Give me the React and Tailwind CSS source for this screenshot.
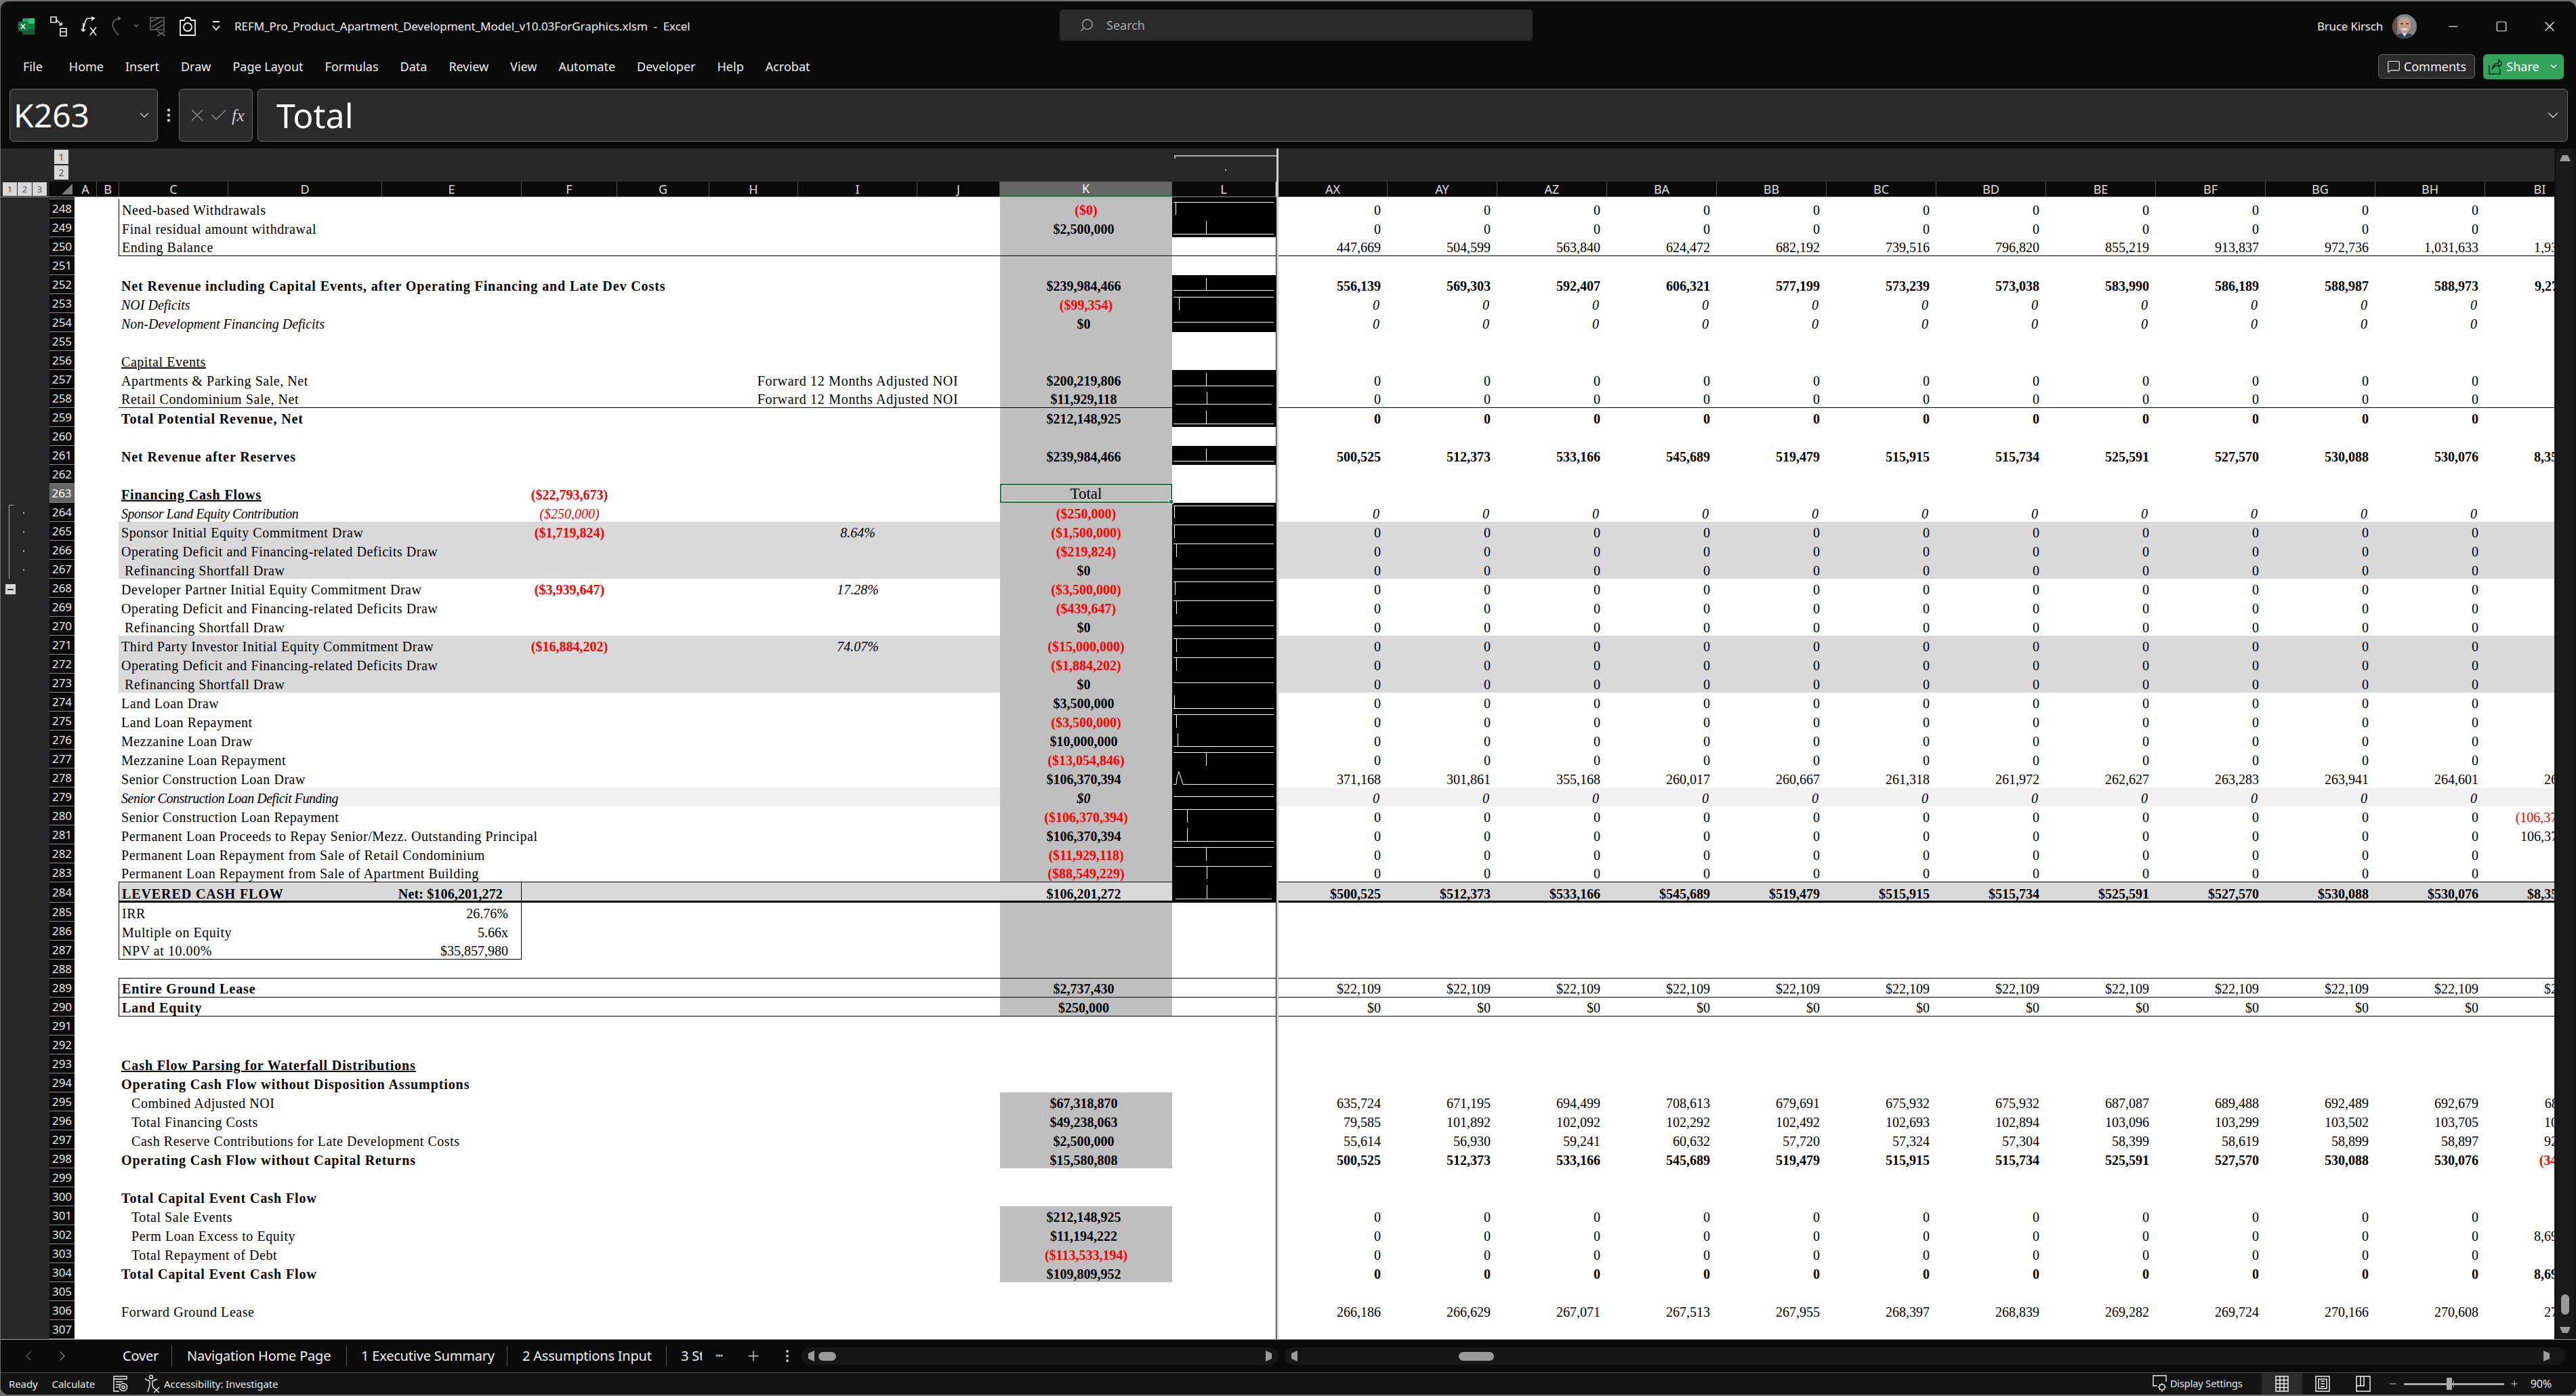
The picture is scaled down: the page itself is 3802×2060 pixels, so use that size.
import { ChevronDown, ChevronLeft, ChevronRight, Search, Minus, Square, X, Plus, Check, MessageSquare, EllipsisVertical } from "lucide-react"

const frozenCols = [
  ["A", "w-[33px]"], ["B", "w-[33px]"], ["C", "w-[161px]"], ["D", "w-[227px]"], ["E", "w-[206px]"],
  ["F", "w-[141px]"], ["G", "w-[136px]"], ["H", "w-[131px]"], ["I", "w-[176px]"], ["J", "w-[122px]"],
  ["K", "w-[254px]"], ["L", "w-[153px]"],
]
const scrollCols = ["AX", "AY", "AZ", "BA", "BB", "BC", "BD", "BE", "BF", "BG", "BH", "BI"]
const menu = ["File", "Home", "Insert", "Draw", "Page Layout", "Formulas", "Data", "Review", "View", "Automate", "Developer", "Help", "Acrobat"]

const z = Array(11).fill("0")
const dollarZero = [...Array(11).fill("$0"), ""]
const r250 = ["447,669", "504,599", "563,840", "624,472", "682,192", "739,516", "796,820", "855,219", "913,837", "972,736", "1,031,633", "1,935,021"]
const r252 = ["556,139", "569,303", "592,407", "606,321", "577,199", "573,239", "573,038", "583,990", "586,189", "588,987", "588,973", "9,270,114"]
const r261 = ["500,525", "512,373", "533,166", "545,689", "519,479", "515,915", "515,734", "525,591", "527,570", "530,088", "530,076", "8,350,220"]
const r278 = ["371,168", "301,861", "355,168", "260,017", "260,667", "261,318", "261,972", "262,627", "263,283", "263,941", "264,601", "265,263"]
const r295 = ["635,724", "671,195", "694,499", "708,613", "679,691", "675,932", "675,932", "687,087", "689,488", "692,489", "692,679", "680,112"]
const r296 = ["79,585", "101,892", "102,092", "102,292", "102,492", "102,693", "102,894", "103,096", "103,299", "103,502", "103,705", "103,909"]
const r297 = ["55,614", "56,930", "59,241", "60,632", "57,720", "57,324", "57,304", "58,399", "58,619", "58,899", "58,897", "921,040"]
const r298 = ["500,525", "512,373", "533,166", "545,689", "519,479", "515,915", "515,734", "525,591", "527,570", "530,088", "530,076", "(345,017)"]
const r306 = ["266,186", "266,629", "267,071", "267,513", "267,955", "268,397", "268,839", "269,282", "269,724", "270,166", "270,608", "271,050"]
const r284 = r261.map((v) => "$" + v)
const r289 = Array(12).fill("$22,109")
const r280 = [...z, "(106,370,394)"]
const r281 = [...z, "106,370,394"]
const r302 = [...z, "8,694,000"]

const FWD = "Forward 12 Months Adjusted NOI"
const DEFICIT = "Operating Deficit and Financing-related Deficits Draw"
const REFI = "Refinancing Shortfall Draw"

const rows = [
  { n: 247 },
  { n: 248, c: "Need-based Withdrawals", k: "($0)", r: z, box: true },
  { n: 249, c: "Final residual amount withdrawal", k: "$2,500,000", r: z, box: true },
  { n: 250, c: "Ending Balance", r: r250, box: true, line: true },
  { n: 251 },
  { n: 252, c: "Net Revenue including Capital Events, after Operating Financing and Late Dev Costs", b: true, k: "$239,984,466", r: r252, rb: true },
  { n: 253, c: "NOI Deficits", i: true, k: "($99,354)", r: z, ri: true },
  { n: 254, c: "Non-Development Financing Deficits", i: true, k: "$0", r: z, ri: true },
  { n: 255 },
  { n: 256, c: "Capital Events", u: true },
  { n: 257, c: "Apartments & Parking Sale, Net", h: FWD, k: "$200,219,806", r: z },
  { n: 258, c: "Retail Condominium Sale, Net", h: FWD, k: "$11,929,118", r: z, line: true },
  { n: 259, c: "Total Potential Revenue, Net", b: true, k: "$212,148,925", r: z, rb: true },
  { n: 260 },
  { n: 261, c: "Net Revenue after Reserves", b: true, k: "$239,984,466", r: r261, rb: true },
  { n: 262 },
  { n: 263, c: "Financing Cash Flows", b: true, u: true, f: "($22,793,673)", fb: true, k: "Total", sel: true },
  { n: 264, c: "Sponsor Land Equity Contribution", i: true, tight: true, f: "($250,000)", k: "($250,000)", r: z, ri: true },
  { n: 265, c: "Sponsor Initial Equity Commitment Draw", f: "($1,719,824)", fb: true, pct: "8.64%", k: "($1,500,000)", r: z, bg: "dark" },
  { n: 266, c: DEFICIT, k: "($219,824)", r: z, bg: "dark" },
  { n: 267, c: REFI, small: true, k: "$0", r: z, bg: "dark" },
  { n: 268, c: "Developer Partner Initial Equity Commitment Draw", f: "($3,939,647)", fb: true, pct: "17.28%", k: "($3,500,000)", r: z },
  { n: 269, c: DEFICIT, k: "($439,647)", r: z },
  { n: 270, c: REFI, small: true, k: "$0", r: z },
  { n: 271, c: "Third Party Investor Initial Equity Commitment Draw", f: "($16,884,202)", fb: true, pct: "74.07%", k: "($15,000,000)", r: z, bg: "dark" },
  { n: 272, c: DEFICIT, k: "($1,884,202)", r: z, bg: "dark" },
  { n: 273, c: REFI, small: true, k: "$0", r: z, bg: "dark" },
  { n: 274, c: "Land Loan Draw", k: "$3,500,000", r: z },
  { n: 275, c: "Land Loan Repayment", k: "($3,500,000)", r: z },
  { n: 276, c: "Mezzanine Loan Draw", k: "$10,000,000", r: z },
  { n: 277, c: "Mezzanine Loan Repayment", k: "($13,054,846)", r: z },
  { n: 278, c: "Senior Construction Loan Draw", k: "$106,370,394", r: r278 },
  { n: 279, c: "Senior Construction Loan Deficit Funding", i: true, tight: true, k: "$0", ki: true, r: z, ri: true, bg: "light" },
  { n: 280, c: "Senior Construction Loan Repayment", k: "($106,370,394)", r: r280 },
  { n: 281, c: "Permanent Loan Proceeds to Repay Senior/Mezz. Outstanding Principal", k: "$106,370,394", r: r281 },
  { n: 282, c: "Permanent Loan Repayment from Sale of Retail Condominium", k: "($11,929,118)", r: z },
  { n: 283, c: "Permanent Loan Repayment from Sale of Apartment Building", k: "($88,549,229)", r: z, line: true },
  { n: 284, c: "LEVERED CASH FLOW", b: true, e: "Net: $106,201,272", k: "$106,201,272", r: r284, rb: true, bg: "dark", box: true, boxR: true, total: true },
  { n: 285, c: "IRR", e2: "26.76%", box: true, boxR: true },
  { n: 286, c: "Multiple on Equity", e2: "5.66x", box: true, boxR: true },
  { n: 287, c: "NPV at 10.00%", e2: "$35,857,980", box: true, boxR: true, boxB: true },
  { n: 288, line: true },
  { n: 289, c: "Entire Ground Lease", b: true, k: "$2,737,430", r: r289, box: true, line: true },
  { n: 290, c: "Land Equity", b: true, k: "$250,000", r: dollarZero, box: true, line: true },
  { n: 291 },
  { n: 292 },
  { n: 293, c: "Cash Flow Parsing for Waterfall Distributions", b: true, u: true },
  { n: 294, c: "Operating Cash Flow without Disposition Assumptions", b: true },
  { n: 295, c: "Combined Adjusted NOI", ind: true, k: "$67,318,870", r: r295 },
  { n: 296, c: "Total Financing Costs", ind: true, k: "$49,238,063", r: r296 },
  { n: 297, c: "Cash Reserve Contributions for Late Development Costs", ind: true, k: "$2,500,000", r: r297 },
  { n: 298, c: "Operating Cash Flow without Capital Returns", b: true, k: "$15,580,808", r: r298, rb: true },
  { n: 299 },
  { n: 300, c: "Total Capital Event Cash Flow", b: true },
  { n: 301, c: "Total Sale Events", ind: true, k: "$212,148,925", r: z },
  { n: 302, c: "Perm Loan Excess to Equity", ind: true, k: "$11,194,222", r: r302 },
  { n: 303, c: "Total Repayment of Debt", ind: true, k: "($113,533,194)", r: z },
  { n: 304, c: "Total Capital Event Cash Flow", b: true, k: "$109,809,952", r: r302, rb: true },
  { n: 305 },
  { n: 306, c: "Forward Ground Lease", r: r306 },
  { n: 307 },
]

// line y, spike x, spike end y
const sparks = {
  248: [4, 5, 23], 249: [23, 50, 4], 252: [22, 50, 4], 253: [4, 10, 24], 254: [13],
  257: [23, 50, 4], 258: [23, 50, 4], 259: [23, 50, 4], 261: [22, 50, 4],
  264: [4, 3, 23], 265: [4, 3, 24], 266: [4, 6, 24], 267: [13], 268: [4, 4, 24], 269: [4, 6, 24], 270: [13],
  271: [4, 6, 24], 272: [4, 6, 24], 273: [13], 274: [23, 3, 4], 275: [4, 6, 24], 276: [23, 8, 4], 277: [4, 50, 24],
  279: [13], 280: [4, 22, 24], 281: [23, 22, 4], 282: [4, 50, 24], 283: [4, 50, 24], 284: [25, 50, 4],
}

function blackCell(n) {
  return n === 247 || n === 248 || n === 249 || n === 252 || n === 253 || n === 254 || n === 257 || n === 258 || n === 259 || n === 261 || (n >= 264 && n <= 284)
}
function greyCell(n) {
  if (n === 284) return false
  return n <= 290 || (n >= 295 && n <= 298) || (n >= 301 && n <= 304)
}

function Spark({ n }) {
  const s = sparks[n]
  if (n === 278) {
    return (
      <svg viewBox="0 0 153 28" className="block w-[153px] h-full" fill="none" stroke="#fff" strokeWidth="1">
        <path d="M2 23.5H6L7 14L10 4.5L13 14L16 23.5H150" />
      </svg>
    )
  }
  if (!s) return null
  const y = s[0] + 0.5
  return (
    <svg viewBox="0 0 153 28" className="block w-[153px] h-full" fill="none" stroke="#fff" strokeWidth="1" shapeRendering="crispEdges">
      <path d={`M2 ${y}H150`} />
      {s[1] && <path d={`M${s[1] + 0.5} ${y}V${s[2]}`} />}
    </svg>
  )
}

function Gutter({ n }) {
  return (
    <div className="w-[72px] shrink-0 bg-[#282828] flex">
      {n >= 264 && n <= 267 && (
        <div className={n === 264 ? "ml-[12px] mt-[3px] w-[7px] border-l border-t border-[#aaa]" : "ml-[12px] w-[7px] border-l border-[#aaa]"} />
      )}
      {n >= 264 && n <= 267 && <div className="ml-[14px] mt-[14px] w-[2px] h-[2px] bg-[#bbb]" />}
      {n === 268 && (
        <div className="ml-[7px] mt-[8px] w-[15px] h-[15px] bg-[#d8d8d8] flex items-center justify-center">
          <div className="w-[9px] h-[2px] bg-[#333]" />
        </div>
      )}
    </div>
  )
}

function money(v) {
  return v && v.startsWith("(") ? "text-[#ff0000]" : "text-black"
}

function Row({ row }) {
  const { n } = row
  const h = row.total ? "h-[30px]" : n === 247 ? "h-[3px]" : "h-[28px]"
  const lead = row.total ? "leading-[20px]" : "leading-[24px]"
  const bg = row.bg === "dark" ? "bg-[#d9d9d9]" : row.bg === "light" ? "bg-[#f2f2f2]" : "bg-white"
  const line = row.total ? "border-b-[3px] border-double border-black bg-clip-padding" : row.line ? "border-b border-black" : ""
  const labelCls = `${row.b ? "font-bold tracking-[0.9px] " : ""}${row.i ? "italic " : ""}${row.tight ? "tracking-[-0.5px] " : ""}${!row.b && !row.i ? "tracking-[0.55px] " : ""}${row.u ? "underline " : ""}`
  const pad = row.ind ? "pl-[19px]" : row.small ? "pl-[9px]" : "pl-[4px]"
  return (
    <div className={`flex ${h}`}>
      <Gutter n={n} />
      <div className={n === 263
        ? "w-[37px] shrink-0 bg-[#666] border-b border-[#888] border-r border-r-[#217346] text-white text-[17px] flex items-center justify-center font-['Noto_Sans',sans-serif]"
        : "w-[37px] shrink-0 bg-[#0a0a0a] border-b border-[#8a8a8a] text-[#e8e8e8] text-[17px] flex items-center justify-center font-['Noto_Sans',sans-serif]"}>
        {n !== 247 && n}
      </div>
      <div className="w-[65px] shrink-0 bg-white" />
      <div className={`w-[1708px] shrink-0 flex text-[20px] ${lead} text-black ${bg} ${line}`}>
        <div className={`w-[162px] shrink-0 h-full flex items-end whitespace-nowrap ${pad} ${labelCls} ${row.box ? "border-l border-black" : ""} ${row.boxB ? "border-b border-black" : ""}`}>
          {row.c}
        </div>
        <div className={`w-[227px] shrink-0 h-full ${row.boxB ? "border-b border-black" : ""}`} />
        <div className={`w-[206px] shrink-0 h-full flex items-end justify-end whitespace-nowrap ${row.e ? "pr-[27px] font-bold tracking-[0.15px]" : "pr-[19px]"} ${row.boxR ? "border-r border-black" : ""} ${row.boxB ? "border-b border-black" : ""}`}>
          {row.e || row.e2}
        </div>
        <div className={`w-[141px] shrink-0 h-full flex items-end justify-center whitespace-nowrap text-[#ff0000] ${row.fb ? "font-bold" : ""} ${row.i ? "italic" : ""}`}>
          {row.f}
        </div>
        <div className="w-[136px] shrink-0" />
        <div className="w-[131px] shrink-0" />
        <div className={`w-[176px] shrink-0 h-full flex items-end justify-center whitespace-nowrap ${row.pct ? "italic" : "tracking-[0.7px]"}`}>
          {row.h || row.pct}
        </div>
        <div className="w-[122px] shrink-0" />
        <div className={`w-[254px] shrink-0 h-full flex items-end justify-center whitespace-nowrap ${greyCell(n) ? "bg-[#bfbfbf]" : ""} ${row.sel ? "relative border-2 border-[#217346] shadow-[inset_0_0_0_1px_#e8e8e8] text-[23px] leading-[23px]" : "font-bold"} ${row.ki ? "italic" : ""} ${money(row.k)} ${row.k && !row.k.startsWith("(") && !row.sel ? "pr-[7px]" : ""}`}>
          {row.k}
          {row.sel && <div className="absolute right-[-4px] bottom-[-4px] w-[7px] h-[7px] bg-[#217346] border border-white" />}
        </div>
        <div className={`w-[153px] shrink-0 h-full ${blackCell(n) ? "bg-black" : ""}`}>
          {n !== 247 && <Spark n={n} />}
        </div>
      </div>
      <div className="w-[4px] shrink-0 border-l border-black bg-[#cfcfcf]" />
      <div className={`w-[1883px] shrink-0 flex overflow-hidden text-[20px] ${lead} text-black ${bg} ${line}`}>
        {(row.r || []).map((v, i) => (
          <div key={i} className={`${i === 0 ? "w-[161px]" : "w-[162px]"} shrink-0 h-full flex items-end justify-end whitespace-nowrap ${v.startsWith("(") ? "pr-[4px]" : "pr-[10px]"} ${row.rb ? "font-bold" : ""} ${row.ri ? "italic pr-[12px]" : ""} ${money(v)}`}>
            {v}
          </div>
        ))}
      </div>
    </div>
  )
}

function ExcelLogo() {
  return (
    <svg width="26" height="26" viewBox="0 0 26 26" className="ml-[25px]">
      <rect x="7" y="1" width="18" height="24" rx="2" fill="#21a366" />
      <rect x="16" y="1" width="9" height="8" fill="#33c481" />
      <rect x="7" y="17" width="18" height="8" fill="#185c37" />
      <rect x="16" y="9" width="9" height="8" fill="#107c41" />
      <rect x="1" y="6" width="14" height="14" rx="1.5" fill="#107c41" />
      <path d="M5 9.5L11 16.5M11 9.5L5 16.5" stroke="#fff" strokeWidth="1.6" />
    </svg>
  )
}

function QuickIcons() {
  return (
    <div className="flex items-center">
      <svg width="26" height="30" viewBox="0 0 26 30" fill="none" stroke="#eee" strokeWidth="1.6" className="ml-[22px]">
        <path d="M1 1H9V9H1ZM9 5L17 13M17 13V9M17 13H13M15 18H24V29H15ZM15 23H24" />
      </svg>
      <svg width="28" height="30" viewBox="0 0 28 30" fill="none" stroke="#eee" strokeWidth="1.6" className="ml-[18px]">
        <path d="M3 18C8 18 6 6 11 3H20M17 1L21 3L17 6M5 22V10M2 19L5 22L8 19M15 16L24 28M24 16L15 28" />
      </svg>
      <svg width="40" height="30" viewBox="0 0 40 30" fill="none" stroke="#666" strokeWidth="1.6" className="ml-[18px]">
        <path d="M14 3C4 3 1 10 3 16C5 22 9 25 11 28M14 3L10 1M14 3L10 6M34 12L37 15L40 12" />
      </svg>
      <svg width="26" height="30" viewBox="0 0 26 30" fill="none" stroke="#666" strokeWidth="1.6" className="ml-[16px]">
        <path d="M2 2H22V20H2ZM2 8L16 2M4 16L20 6M8 20L22 12M12 22L24 29M24 22L12 29" />
      </svg>
      <svg width="26" height="30" viewBox="0 0 26 30" fill="none" stroke="#eee" strokeWidth="1.8" className="ml-[18px]">
        <path d="M2 6H8L10 2H16L18 6H24V28H2Z" />
        <circle cx="13" cy="16" r="6" />
      </svg>
      <svg width="14" height="18" viewBox="0 0 14 18" fill="none" stroke="#eee" strokeWidth="1.8" className="ml-[22px]">
        <path d="M2 2H12M2 8L7 14L12 8" />
      </svg>
    </div>
  )
}

function Avatar() {
  return (
    <svg width="36" height="36" viewBox="0 0 36 36" className="ml-[14px]">
      <clipPath id="av"><circle cx="18" cy="18" r="18" /></clipPath>
      <g clipPath="url(#av)">
        <rect width="36" height="36" fill="#7e868c" />
        <rect x="0" width="7" height="36" fill="#6b4b44" />
        <path d="M4 36C5 29 12 28 18 28C24 28 31 29 32 36Z" fill="#38424f" />
        <path d="M14 27L18 33L22 27Z" fill="#e6e8ea" />
        <ellipse cx="18" cy="16" rx="9" ry="12" fill="#c99a84" />
        <path d="M9 14C9 8 12 4 18 4C24 4 27 8 27 14C25 9 22 7 18 7C14 7 11 9 9 14Z" fill="#a9a19a" />
        <path d="M13 21C15 24 21 24 23 21Z" fill="#fff" />
        <path d="M12 14H16M20 14H24" stroke="#3b2a26" strokeWidth="1.4" />
      </g>
    </svg>
  )
}

function Tri({ dir }) {
  const d = dir === "l" ? "M12 0V16L3 12V4Z" : dir === "r" ? "M0 0V16L9 12V4Z" : dir === "u" ? "M0 12H16L12 3H4Z" : "M0 0H16L12 9H4Z"
  return (
    <svg width={dir === "u" || dir === "d" ? 16 : 12} height={dir === "u" || dir === "d" ? 12 : 16} viewBox={dir === "u" || dir === "d" ? "0 0 16 12" : "0 0 12 16"}>
      <path d={d} fill="#9a9a9a" />
    </svg>
  )
}

export default function App() {
  return (
    <div className="w-[3802px] h-[2060px] bg-[#707070] pt-[2px] pb-[2px] pl-[1px] overflow-hidden">
      <div className="w-[3801px] h-[2056px] bg-[#0a0a0a] rounded-[12px] overflow-hidden flex flex-col font-['Noto_Sans',sans-serif] text-[#eee]">

        {/* title bar */}
        <div className="h-[74px] shrink-0 flex items-center relative">
          <ExcelLogo />
          <QuickIcons />
          <div className="ml-[20px] text-[17px] tracking-[-0.05px] whitespace-nowrap">
            REFM_Pro_Product_Apartment_Development_Model_v10.03ForGraphics.xlsm&nbsp; - &nbsp;Excel
          </div>
          <div className="absolute left-[1563px] top-[12px] w-[698px] h-[46px] bg-[#2a2a2a] rounded-[5px] flex items-center pl-[29px] text-[#a8a8a8] text-[18px]">
            <Search size={22} strokeWidth={1.5} className="-scale-x-100" />
            <span className="ml-[18px]">Search</span>
          </div>
          <div className="ml-auto flex items-center mr-[27px]">
            <span className="text-[17px] tracking-[-0.2px]">Bruce Kirsch</span>
            <Avatar />
            <Minus size={20} strokeWidth={1.5} className="ml-[44px]" />
            <Square size={18} strokeWidth={1.6} className="ml-[52px]" />
            <X size={24} strokeWidth={1.4} className="ml-[50px]" />
          </div>
        </div>

        {/* menu row */}
        <div className="h-[44px] shrink-0 flex items-center pl-[33px] text-[18px] relative">
          <div className="flex gap-[32px] whitespace-nowrap">
            {menu.map((m) => <span key={m} className={m === "File" ? "mr-[7px]" : ""}>{m}</span>)}
          </div>
          <div className="ml-auto flex items-center mr-[18px] gap-[12px]">
            <div className="w-[143px] h-[36px] rounded-[6px] bg-[#2a2a2a] border border-[#666] flex items-center justify-center gap-[5px] text-[18px]">
              <MessageSquare size={20} strokeWidth={1.4} />
              Comments
            </div>
            <div className="w-[119px] h-[37px] rounded-[6px] bg-[#34a35c] flex items-center justify-center gap-[6px] text-[18px] text-white">
              <svg width="20" height="24" viewBox="0 0 20 24" fill="none" stroke="#0c2e18" strokeWidth="1.5">
                <path d="M1 10V23H17V15M5 17C6 10 10 7 15 7V2L20 8L15 13V10C10 10 7 12 5 17Z" />
              </svg>
              Share
              <ChevronDown size={14} strokeWidth={2.4} className="ml-[8px]" />
            </div>
          </div>
        </div>

        {/* formula bar */}
        <div className="shrink-0 flex pl-[13px] pr-[12px] pt-[11px] pb-[10px] h-[99px]">
          <div className="w-[219px] h-[78px] bg-[#2a2a2a] border border-[#6a6a6a] rounded-[6px] flex items-center pl-[5px] pr-[8px] text-[48px] text-white">
            K263
            <ChevronDown size={22} strokeWidth={1.4} className="ml-auto text-[#ccc]" />
          </div>
          <div className="w-[31px] flex items-center justify-center">
            <EllipsisVertical size={26} strokeWidth={2} className="text-[#ccc]" />
          </div>
          <div className="w-[109px] h-[78px] bg-[#2a2a2a] border border-[#6a6a6a] rounded-[6px] flex items-center justify-center gap-[2px] text-[#8a8a8a]">
            <X size={30} strokeWidth={1.2} />
            <Check size={30} strokeWidth={1.2} />
            <span className="ml-[2px] text-[26px] italic font-['Liberation_Serif',serif] text-[#ccc]">fx</span>
          </div>
          <div className="ml-[7px] flex-1 h-[78px] bg-[#2a2a2a] border border-[#6a6a6a] rounded-[6px] flex items-center pl-[27px] pr-[8px] text-[50px] text-white">
            Total
            <ChevronDown size={26} strokeWidth={1.3} className="ml-auto text-[#ccc]" />
          </div>
        </div>

        {/* sheet */}
        <div className="h-[1757px] shrink-0 flex">
          <div className="w-[3769px] shrink-0 flex flex-col">

            {/* outline band */}
            <div className="h-[49px] shrink-0 bg-[#282828] flex">
              <div className="ml-[79px] w-[21px] pt-[2px] flex flex-col gap-[2px] text-[14px] text-[#555]">
                <div className="h-[21px] bg-[#d8d8d8] flex items-center justify-center">1</div>
                <div className="h-[21px] bg-[#d8d8d8] flex items-center justify-center">2</div>
              </div>
              <div className="ml-[1632px] w-[151px] pt-[10px]">
                <div className="h-[5px] border-t-2 border-l-2 border-[#aaa]" />
                <div className="mx-auto mt-[16px] w-[2px] h-[2px] bg-[#bbb]" />
              </div>
              <div className="w-[3px] bg-[#cfcfcf]" />
            </div>

            {/* column headers */}
            <div className="h-[23px] shrink-0 flex bg-[#0a0a0a] border-b border-[#9a9a9a] text-[18px] leading-[22px] text-[#ddd]">
              <div className="w-[72px] shrink-0 bg-[#282828] flex gap-[1px] pl-[3px] pt-[1px] text-[13px] text-[#555]">
                <div className="w-[21px] h-[20px] bg-[#d8d8d8] flex items-center justify-center">1</div>
                <div className="w-[21px] h-[20px] bg-[#d8d8d8] flex items-center justify-center">2</div>
                <div className="w-[21px] h-[20px] bg-[#d8d8d8] flex items-center justify-center">3</div>
              </div>
              <div className="w-[37px] shrink-0 flex items-end justify-end pr-[3px] pb-[3px]">
                <svg width="16" height="16" viewBox="0 0 16 16"><path d="M0 16L16 0V16Z" fill="#7a7a7a" /></svg>
              </div>
              {frozenCols.map(([name, w]) => (
                <div key={name} className={`${w} shrink-0 flex items-center justify-center border-r border-[#555] ${name === "K" ? "bg-[#666] text-white border-b-2 border-b-[#217346]" : ""}`}>
                  {name}
                </div>
              ))}
              <div className="w-[4px] shrink-0 bg-[#cfcfcf]" />
              {scrollCols.map((name, i) => (
                <div key={name} className={`${i === 0 ? "w-[161px]" : "w-[162px]"} shrink-0 flex items-center justify-center border-r border-[#555] ${i === 11 ? "w-[102px]" : ""}`}>
                  {name}
                </div>
              ))}
            </div>

            {/* rows */}
            <div className="font-['Liberation_Serif',serif]">
              {rows.map((row) => <Row key={row.n} row={row} />)}
            </div>
          </div>

          {/* vertical scrollbar */}
          <div className="w-[32px] shrink-0 bg-[#141414] py-[1px] px-[3px]">
            <div className="h-full bg-[#1a1a1a] rounded-full flex flex-col items-center pt-[6px] pb-[3px]">
              <Tri dir="u" />
              <div className="mt-auto w-[12px] h-[30px] rounded-full bg-[#9a9a9a]" />
              <div className="mt-[18px] mb-[2px]"><Tri dir="d" /></div>
            </div>
          </div>
        </div>

        {/* tab strip */}
        <div className="h-[49px] shrink-0 border-t border-[#a0a0a0] flex items-center text-[20px] tracking-[-0.2px] text-[#f0f0f0]">
          <ChevronLeft size={24} strokeWidth={1} className="ml-[29px] text-[#999]" />
          <ChevronRight size={24} strokeWidth={1} className="ml-[26px] text-[#ddd]" />
          <div className="ml-[58px] w-[879px] flex h-[34px] items-center overflow-hidden whitespace-nowrap">
            <div className="w-[92px] shrink-0 pl-[19px] border-r border-[#555]">Cover</div>
            <div className="w-[258px] shrink-0 pl-[22px] border-r border-[#555]">Navigation Home Page</div>
            <div className="w-[237px] shrink-0 pl-[21px] border-r border-[#555]">1 Executive Summary</div>
            <div className="w-[235px] shrink-0 pl-[22px] border-r border-[#555]">2 Assumptions Input</div>
            <div className="w-[52px] shrink-0 pl-[21px] overflow-hidden">3 Stabilized</div>
          </div>
          <div className="ml-[15px] w-[18px] text-[12px] leading-[12px] tracking-[-1px] text-[#ccc]">•••</div>
          <Plus size={24} strokeWidth={1.4} className="ml-[26px] text-[#ccc]" />
          <EllipsisVertical size={24} strokeWidth={2} className="ml-[26px] text-[#bbb]" />
          <div className="ml-[9px] w-[704px] h-[26px] rounded-full bg-[#161616] flex items-center px-[7px]">
            <Tri dir="l" />
            <div className="ml-[6px] w-[26px] h-[13px] rounded-full bg-[#9a9a9a]" />
            <div className="ml-auto"><Tri dir="r" /></div>
          </div>
          <div className="ml-[9px] w-[1891px] h-[26px] rounded-full bg-[#161616] flex items-center px-[7px]">
            <Tri dir="l" />
            <div className="ml-[238px] w-[52px] h-[13px] rounded-full bg-[#9a9a9a]" />
            <div className="ml-auto mr-[14px]"><Tri dir="r" /></div>
          </div>
        </div>

        {/* status bar */}
        <div className="h-[33px] shrink-0 border-t border-[#4a4a4a] bg-[#141414] flex items-center text-[15px] tracking-[-0.1px] text-[#e8e8e8]">
          <span className="ml-[12px]">Ready</span>
          <span className="ml-[21px]">Calculate</span>
          <svg width="22" height="26" viewBox="0 0 22 26" fill="none" stroke="#eee" strokeWidth="1.4" className="ml-[27px]">
            <path d="M1 2H20V6H1ZM1 6V24H9M4 10H14M4 14H10M4 18H8" />
            <circle cx="15" cy="18" r="5.5" />
            <circle cx="15" cy="18" r="2" />
          </svg>
          <svg width="24" height="28" viewBox="0 0 24 28" fill="none" stroke="#eee" strokeWidth="1.4" className="ml-[24px]">
            <circle cx="10" cy="4" r="2.5" />
            <path d="M1 7L8 10V16L5 26M19 7L12 10V16L13 20M13 19L22 27M22 19L14 27" />
          </svg>
          <span className="ml-[5px]">Accessibility: Investigate</span>
          <div className="ml-auto flex items-center h-full mr-[36px]">
            <svg width="24" height="26" viewBox="0 0 24 26" fill="none" stroke="#eee" strokeWidth="1.4">
              <path d="M8 16H2V1H21V10" />
              <circle cx="15" cy="18" r="4" />
              <path d="M15 12V14M15 22V25M9 18H11M19 18H21M11 14L12.5 15.5M19 14L17.5 15.5M11 22L12.5 20.5M19 22L17.5 20.5" />
            </svg>
            <span className="ml-[3px] mr-[28px] text-[14.5px]">Display Settings</span>
            <div className="w-[60px] h-full bg-[#2a2a2a] flex items-center justify-center">
              <svg width="20" height="32" viewBox="0 0 20 32" fill="none" stroke="#eee" strokeWidth="1.5">
                <path d="M1 5H19V27H1ZM7 5V27M13 5V27M1 10.5H19M1 16H19M1 21.5H19" />
              </svg>
            </div>
            <svg width="22" height="32" viewBox="0 0 22 32" fill="none" stroke="#eee" strokeWidth="1.5" className="ml-[19px]">
              <path d="M1 5H21V27H1ZM5 9H17V23H5ZM8 12H14M8 16H14M8 20H14" />
            </svg>
            <svg width="22" height="32" viewBox="0 0 22 32" fill="none" stroke="#eee" strokeWidth="1.5" className="ml-[38px]">
              <path d="M1 5H21V27H1ZM1 19H12V5M12 12V5M7 5V19" />
            </svg>
            <Minus size={14} strokeWidth={1.5} className="ml-[26px]" />
            <div className="ml-[9px] w-[148px] h-[3px] bg-[#aaa] relative">
              <div className="absolute left-[63px] top-[-8px] w-[8px] h-[18px] bg-[#aaa]" />
              <div className="absolute left-[73px] top-[-4px] w-[1px] h-[10px] bg-[#aaa]" />
            </div>
            <Plus size={14} strokeWidth={1.5} className="ml-[8px]" />
            <span className="ml-[17px] text-[16px]">90%</span>
          </div>
        </div>
      </div>
    </div>
  )
}
